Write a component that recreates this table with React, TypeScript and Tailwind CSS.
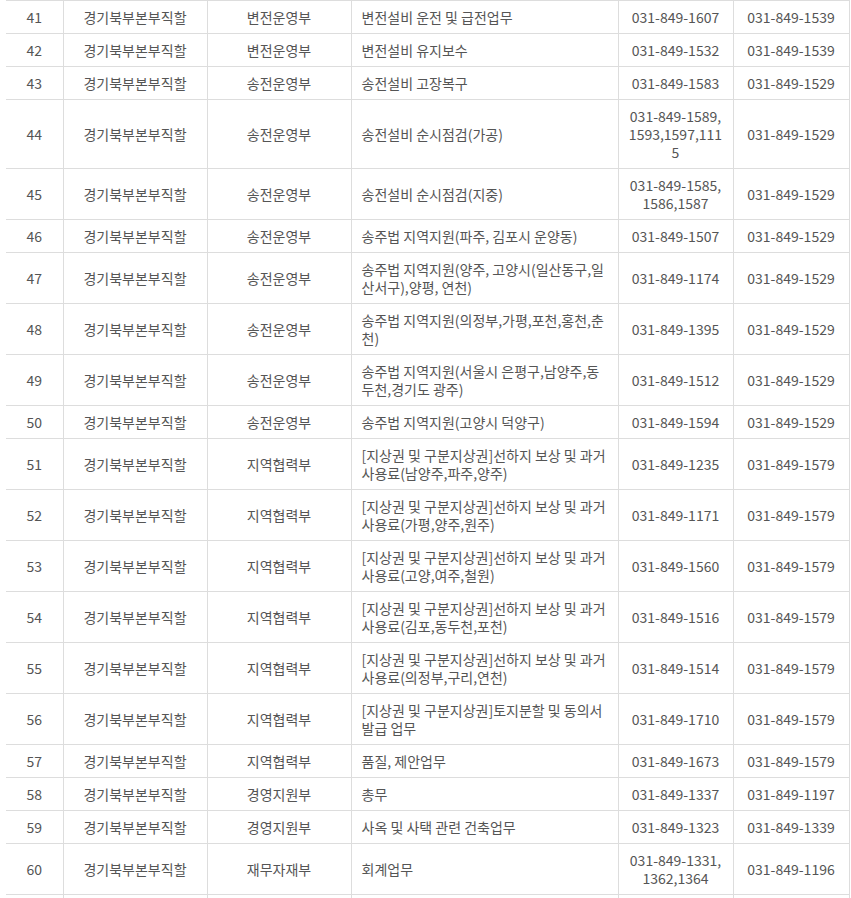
type Row = [string, string, string, string, string, string];

const rows: Row[] = [
  ["41", "경기북부본부직할", "변전운영부", "변전설비 운전 및 급전업무", "031-849-1607", "031-849-1539"],
  ["42", "경기북부본부직할", "변전운영부", "변전설비 유지보수", "031-849-1532", "031-849-1539"],
  ["43", "경기북부본부직할", "송전운영부", "송전설비 고장복구", "031-849-1583", "031-849-1529"],
  ["44", "경기북부본부직할", "송전운영부", "송전설비 순시점검(가공)", "031-849-1589, 1593,1597,1115", "031-849-1529"],
  ["45", "경기북부본부직할", "송전운영부", "송전설비 순시점검(지중)", "031-849-1585, 1586,1587", "031-849-1529"],
  ["46", "경기북부본부직할", "송전운영부", "송주법 지역지원(파주, 김포시 운양동)", "031-849-1507", "031-849-1529"],
  ["47", "경기북부본부직할", "송전운영부", "송주법 지역지원(양주, 고양시(일산동구,일산서구),양평, 연천)", "031-849-1174", "031-849-1529"],
  ["48", "경기북부본부직할", "송전운영부", "송주법 지역지원(의정부,가평,포천,홍천,춘천)", "031-849-1395", "031-849-1529"],
  ["49", "경기북부본부직할", "송전운영부", "송주법 지역지원(서울시 은평구,남양주,동두천,경기도 광주)", "031-849-1512", "031-849-1529"],
  ["50", "경기북부본부직할", "송전운영부", "송주법 지역지원(고양시 덕양구)", "031-849-1594", "031-849-1529"],
  ["51", "경기북부본부직할", "지역협력부", "[지상권 및 구분지상권]선하지 보상 및 과거 사용료(남양주,파주,양주)", "031-849-1235", "031-849-1579"],
  ["52", "경기북부본부직할", "지역협력부", "[지상권 및 구분지상권]선하지 보상 및 과거 사용료(가평,양주,원주)", "031-849-1171", "031-849-1579"],
  ["53", "경기북부본부직할", "지역협력부", "[지상권 및 구분지상권]선하지 보상 및 과거 사용료(고양,여주,철원)", "031-849-1560", "031-849-1579"],
  ["54", "경기북부본부직할", "지역협력부", "[지상권 및 구분지상권]선하지 보상 및 과거 사용료(김포,동두천,포천)", "031-849-1516", "031-849-1579"],
  ["55", "경기북부본부직할", "지역협력부", "[지상권 및 구분지상권]선하지 보상 및 과거 사용료(의정부,구리,연천)", "031-849-1514", "031-849-1579"],
  ["56", "경기북부본부직할", "지역협력부", "[지상권 및 구분지상권]토지분할 및 동의서 발급 업무", "031-849-1710", "031-849-1579"],
  ["57", "경기북부본부직할", "지역협력부", "품질, 제안업무", "031-849-1673", "031-849-1579"],
  ["58", "경기북부본부직할", "경영지원부", "총무", "031-849-1337", "031-849-1197"],
  ["59", "경기북부본부직할", "경영지원부", "사옥 및 사택 관련 건축업무", "031-849-1323", "031-849-1339"],
  ["60", "경기북부본부직할", "재무자재부", "회계업무", "031-849-1331, 1362,1364", "031-849-1196"],
];

const cell = "border border-[#dddddd] px-[10px] py-[7px] align-middle [overflow-wrap:break-word]";

export default function App() {
  return (
    <div
      className="bg-white text-[14px] leading-[18px] text-[#555555]"
      style={{ fontFamily: '"Noto Sans CJK KR", "Noto Sans", sans-serif' }}
    >
      <table className="ml-[6px] w-[843px] table-fixed border-collapse">
        <colgroup>
          <col className="w-[57px]" />
          <col className="w-[144px]" />
          <col className="w-[144px]" />
          <col className="w-[267px]" />
          <col className="w-[115px]" />
          <col className="w-[116px]" />
        </colgroup>
        <tbody>
          {rows.map((r) => (
            <tr key={r[0]}>
              <td className={`${cell} border-l-0 text-center`}>{r[0]}</td>
              <td className={`${cell} text-center`}>{r[1]}</td>
              <td className={`${cell} text-center`}>{r[2]}</td>
              <td className={`${cell} text-left`}>{r[3]}</td>
              <td className={`${cell} text-center`}>{r[4]}</td>
              <td className={`${cell} text-center`}>{r[5]}</td>
            </tr>
          ))}
          {/* next row continues below the fold */}
          <tr>
            <td className={`${cell} border-l-0`}>&nbsp;</td>
            <td className={cell}>&nbsp;</td>
            <td className={cell}>&nbsp;</td>
            <td className={cell}>&nbsp;</td>
            <td className={cell}>&nbsp;</td>
            <td className={cell}>&nbsp;</td>
          </tr>
        </tbody>
      </table>
    </div>
  );
}
